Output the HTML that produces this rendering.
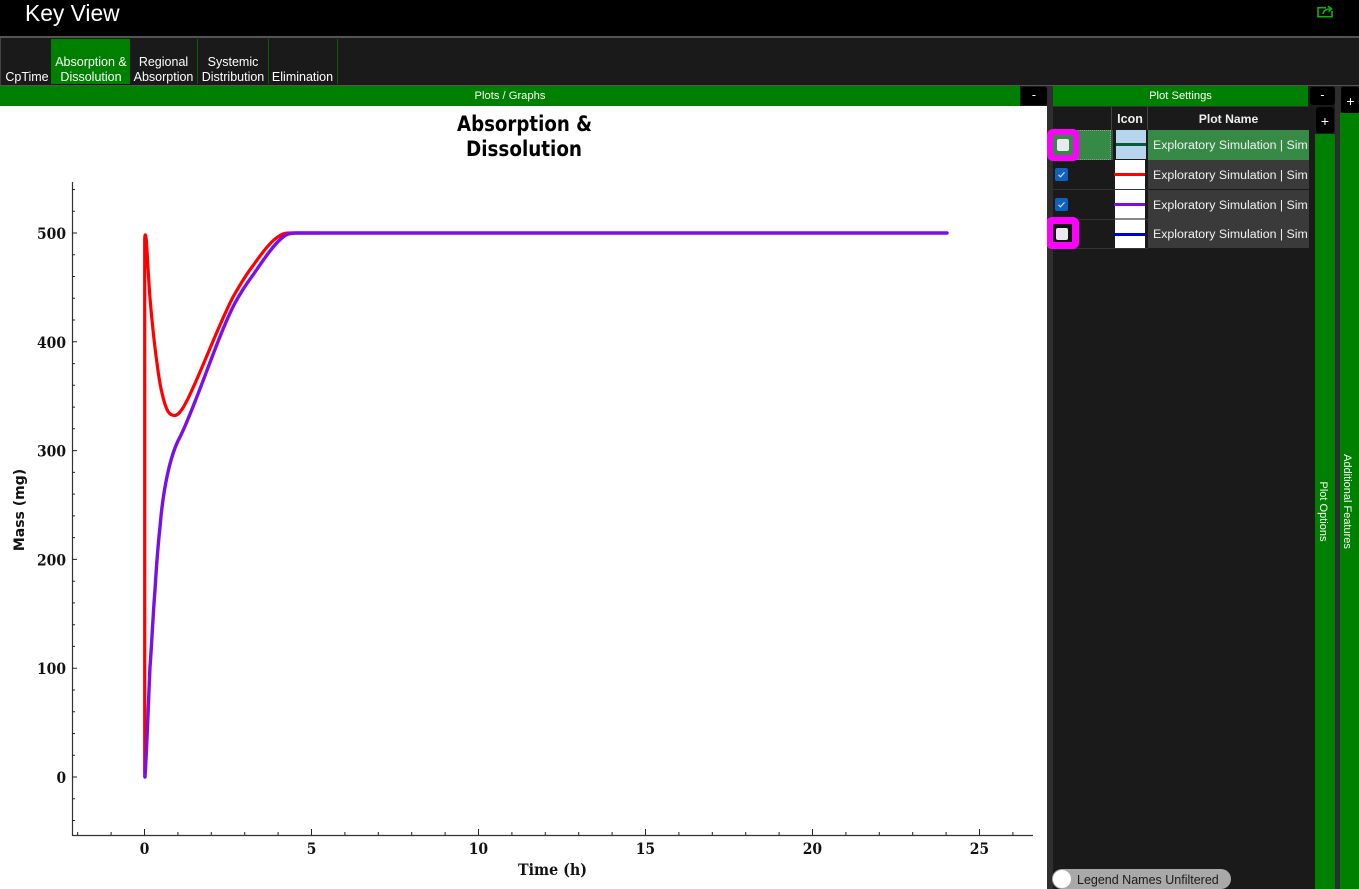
<!DOCTYPE html>
<html><head><meta charset="utf-8">
<style>
html,body{margin:0;padding:0;background:#1a1a1a}
#r{position:relative;width:1359px;height:889px;overflow:hidden;background:#1a1a1a;font-family:"Liberation Sans",sans-serif;color:#fff;font-size:12.5px}
#r div{position:absolute;box-sizing:border-box}
.t{white-space:nowrap;text-align:center;line-height:15px}
.btn{background:#000;border-radius:3px;text-align:center;color:#fff;line-height:17px}
.nm{left:1148px;width:161px;padding-left:5px;white-space:nowrap;overflow:hidden;background:#3a3a3a;line-height:30px;color:#f2f2f2;font-size:12.35px}
.ic{background:#fff;left:1115px;width:30px}
.ln{left:1114px;width:31px;height:3px}
.sep{height:1px;left:1053px;width:95px;background:#333}
.cb{background:#0d62c0;border-radius:2px;width:13px;height:13px;left:1055px}
.w{background:#e9e9ef;border-radius:2px;width:12px;height:12px}
</style></head><body>
<div id="r">
<div style="left:0;top:0;width:1359px;height:36px;background:#000"></div>
<div style="left:25px;top:-1px;font-size:22.8px;line-height:28px;color:#fff">Key View</div>
<svg style="position:absolute;left:1317px;top:5px" width="17" height="13" viewBox="0 0 17 13" fill="none" stroke="#11b011" stroke-width="1.6"><path d="M9 2.7H1v9h14V6"/><path d="M6 9c.5-3.5 3-5 7-5M11 1.2l3.5 2.6L11.5 6.5"/></svg>
<div style="left:0;top:36px;width:1359px;height:2px;background:#555"></div>

<div style="left:0;top:38px;width:1px;height:47px;background:#444"></div>
<div style="left:51px;top:39px;width:79px;height:45px;background:#008000"></div>
<div style="left:197px;top:39px;width:1px;height:45px;background:#0b5c0b"></div>
<div style="left:268px;top:39px;width:1px;height:45px;background:#0b5c0b"></div>
<div style="left:337px;top:39px;width:1px;height:45px;background:#0b5c0b"></div>
<div class="t" style="left:2px;top:69.5px;width:50px">CpTime</div>
<div class="t" style="left:51px;top:54.5px;width:80px">Absorption &amp;<br>Dissolution</div>
<div class="t" style="left:130px;top:54.5px;width:67px">Regional<br>Absorption</div>
<div class="t" style="left:198px;top:54.5px;width:70px">Systemic<br>Distribution</div>
<div class="t" style="left:268.5px;top:69.5px;width:68px">Elimination</div>

<div style="left:0;top:85px;width:1359px;height:1px;background:#555"></div>
<div style="left:0;top:86px;width:1020px;height:20px;background:#008000"></div>
<div class="t" style="left:0;top:89px;width:1020px;font-size:11.2px">Plots / Graphs</div>
<div class="btn" style="left:1021px;top:87px;width:26px;height:18px">-</div>
<div style="left:1047px;top:86px;width:6px;height:803px;background:#2e2e2e"></div>
<div style="left:1053px;top:86px;width:255px;height:20px;background:#008000"></div>
<div class="t" style="left:1053px;top:89px;width:255px;font-size:11.2px">Plot Settings</div>
<div class="btn" style="left:1310px;top:87px;width:25px;height:18px">-</div>
<div style="left:1335px;top:86px;width:6px;height:803px;background:#2e2e2e"></div>
<div class="btn" style="left:1341px;top:87px;width:18px;height:26px;line-height:28px;font-size:14px;text-indent:1px">+</div>
<div style="left:1340px;top:113px;width:19px;height:776px;background:#008000"></div>
<div class="t" style="left:1299px;top:494px;width:95px;transform:rotate(90deg);font-size:11px">Additional Features</div>
<div class="btn" style="left:1316px;top:107px;width:18px;height:26px;line-height:29px;font-size:14px">+</div>
<div style="left:1315px;top:134px;width:20px;height:755px;background:#008000"></div>
<div class="t" style="left:1284.5px;top:504px;width:75px;transform:rotate(90deg);font-size:11px">Plot Options</div>

<!-- table -->
<div style="left:1053px;top:106px;width:256px;height:1px;background:#333"></div>
<div style="left:1111px;top:107px;width:1px;height:23px;background:#444"></div>
<div style="left:1147px;top:107px;width:1px;height:23px;background:#444"></div>
<div class="t" style="left:1112.5px;top:112px;width:35px;font-weight:bold;color:#eee">Icon</div>
<div class="t" style="left:1148px;top:112px;width:161px;font-weight:bold;color:#eee;font-size:12.2px">Plot Name</div>

<div style="left:1053px;top:130px;width:58px;height:30px;background:#378a46;border:1px dotted #9a9a9a"></div>
<div style="left:1111px;top:130px;width:2px;height:30px;background:#2a5a35"></div>
<div style="left:1116px;top:130px;width:30px;height:29px;background:#b7d5ef"></div>
<div style="left:1116px;top:143px;width:30px;height:3px;background:#0b5a3a"></div>
<div class="nm" style="top:130px;height:30px;background:#378a46">Exploratory Simulation | Sim</div>

<div class="sep" style="top:189px"></div>
<div class="ic" style="top:160px;height:29px"></div>
<div class="ln" style="top:173px;background:#f00"></div>
<div class="nm" style="top:160px;height:29px">Exploratory Simulation | Sim</div>
<div class="cb" style="top:168px"></div>
<svg style="position:absolute;left:1055px;top:168px" width="13" height="13" fill="none" stroke="#cfe3fa" stroke-width="1.2"><path d="M3.5 6.8l2 2 4-4.4"/></svg>

<div class="sep" style="top:219px"></div>
<div class="ic" style="top:190px;height:29px"></div>
<div class="ln" style="top:203px;background:#7a10e0"></div>
<div class="nm" style="top:190px;height:29px">Exploratory Simulation | Sim</div>
<div class="cb" style="top:198px"></div>
<svg style="position:absolute;left:1055px;top:198px" width="13" height="13" fill="none" stroke="#cfe3fa" stroke-width="1.2"><path d="M3.5 6.8l2 2 4-4.4"/></svg>

<div class="sep" style="top:248px"></div>
<div class="ic" style="top:220px;height:28px"></div>
<div style="left:1115px;top:218px;width:30px;height:2px;background:#888"></div>
<div class="ln" style="top:233px;background:#0000d8"></div>
<div class="nm" style="top:219px;height:29px">Exploratory Simulation | Sim</div>

<div style="left:1047px;top:129px;width:32px;height:32px;border:6px solid #f0f;border-radius:6px;background:#378a46"></div>
<div class="w" style="left:1057px;top:139px"></div>
<div style="left:1046px;top:217px;width:33px;height:32px;border:7px solid #f0f;border-radius:6px;background:#111"></div>
<div class="w" style="left:1056px;top:228px"></div>

<!-- toggle -->
<div style="left:1052px;top:869px;width:179px;height:20px;background:#a9a9a9;border-radius:10px"></div>
<div style="left:1053px;top:870px;width:18px;height:18px;background:#fff;border-radius:50%"></div>
<div style="left:1077px;top:872.5px;line-height:15px;color:#1a1a1a;white-space:nowrap">Legend Names Unfiltered</div>

<!-- plot -->
<svg style="position:absolute;left:0;top:106px" width="1047" height="783" viewBox="0 106 1047 783">
<rect x="0" y="106" width="1047" height="783" fill="#fff"/>
<g font-family="'DejaVu Sans',sans-serif" font-weight="bold" font-size="21" fill="#000">
<text x="457" y="131" textLength="135" lengthAdjust="spacingAndGlyphs">Absorption &amp;</text>
<text x="466" y="156" textLength="116" lengthAdjust="spacingAndGlyphs">Dissolution</text>
</g>
<path d="M72.5 182V835.5H1033" fill="none" stroke="#333" stroke-width="1.2"/>
<path fill="none" stroke="#222" stroke-width="1" d="M72 820.5h3M72 798.8h3M72 755.2h3M72 733.5h3M72 711.7h3M72 690h3M72 646.4h3M72 624.7h3M72 602.9h3M72 581.2h3M72 537.6h3M72 515.9h3M72 494.1h3M72 472.4h3M72 428.8h3M72 407.1h3M72 385.3h3M72 363.6h3M72 320h3M72 298.3h3M72 276.5h3M72 254.8h3M72 211.2h3M72 189.5h3
M77.7 835v-3M111.1 835v-3M177.9 835v-3M211.3 835v-3M244.7 835v-3M278.1 835v-3M344.9 835v-3M378.3 835v-3M411.7 835v-3M445.1 835v-3M511.9 835v-3M545.3 835v-3M578.7 835v-3M612.1 835v-3M678.9 835v-3M712.3 835v-3M745.7 835v-3M779.1 835v-3M845.9 835v-3M879.3 835v-3M912.7 835v-3M946.1 835v-3M1012.9 835v-3"/>
<path fill="none" stroke="#222" stroke-width="1" d="M72 777h5M72 668.2h5M72 559.4h5M72 450.6h5M72 341.8h5M72 233h5M144.5 835v-6M311.5 835v-6M478.5 835v-6M645.5 835v-6M812.5 835v-6M979.5 835v-6"/>
<g font-family="'DejaVu Serif',serif" font-weight="bold" font-size="16" fill="#111">
<text x="56.5" y="783" textLength="9.6" lengthAdjust="spacingAndGlyphs">0</text>
<text x="37" y="674" textLength="29" lengthAdjust="spacingAndGlyphs">100</text>
<text x="37" y="565.5" textLength="29" lengthAdjust="spacingAndGlyphs">200</text>
<text x="37" y="456.5" textLength="29" lengthAdjust="spacingAndGlyphs">300</text>
<text x="37" y="348" textLength="29" lengthAdjust="spacingAndGlyphs">400</text>
<text x="37" y="239" textLength="29" lengthAdjust="spacingAndGlyphs">500</text>
<text x="139.7" y="854" textLength="9.6" lengthAdjust="spacingAndGlyphs">0</text>
<text x="306.7" y="854" textLength="9.6" lengthAdjust="spacingAndGlyphs">5</text>
<text x="468.7" y="854" textLength="19.4" lengthAdjust="spacingAndGlyphs">10</text>
<text x="635.7" y="854" textLength="19.4" lengthAdjust="spacingAndGlyphs">15</text>
<text x="802.7" y="854" textLength="19.4" lengthAdjust="spacingAndGlyphs">20</text>
<text x="969.7" y="854" textLength="19.4" lengthAdjust="spacingAndGlyphs">25</text>
<text x="518" y="875" textLength="69" lengthAdjust="spacingAndGlyphs">Time (h)</text>
</g>
<text transform="translate(24 510) rotate(-90)" font-family="'DejaVu Sans',sans-serif" font-weight="bold" font-size="14" text-anchor="middle" fill="#111">Mass (mg)</text>
<path fill="none" stroke="#f00" stroke-width="3.2" stroke-linejoin="round" d="M144.7 777L144.7 240C144.8 232 146 233 146.8 247C147.8 265 149 285 150 298C151 310 152 320 153 330C154.3 342 155.5 353 157 363C158.5 375 160 385 162 393C164 402 166 408 168 411.5C170 414.5 172 415.5 174.5 415.5C178 415.5 181 411 183.5 407C187 401 189.5 396 192 390C205 362 220 322 233 297C240 285 245 276 252 267C260 256 270 241 280 235.5C282 234 285 233 290 233L320 233"/>
<path fill="none" stroke="#7a10e8" stroke-width="3.4" stroke-linejoin="round" stroke-linecap="round" d="M145 777C147 745 148.5 700 150 667C152 640 153 615 155 590C156.5 565 158 545 160 527C163 490 170 455 180 437C196 405 218 335 235 303C241 292 247 283 253 275C262 262 273 245 283 237C286 234 290 233 296 233L947 233"/>
</svg>
</div>
</body></html>
